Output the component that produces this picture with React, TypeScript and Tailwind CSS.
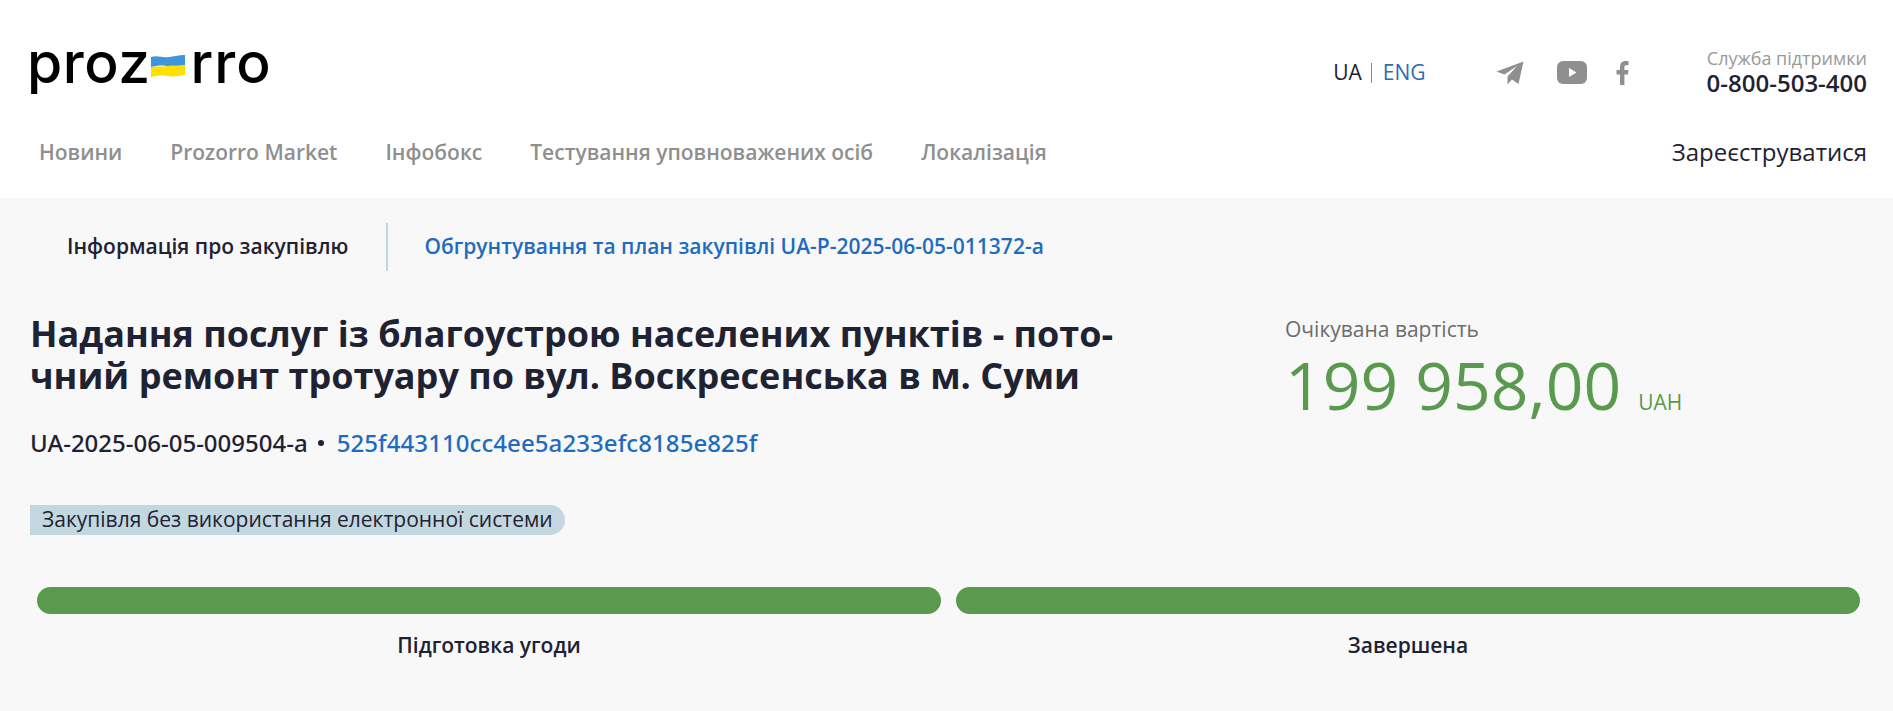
export default function App() {
  const nav = ["Новини", "Prozorro Market", "Інфобокс", "Тестування уповноважених осіб", "Локалізація"];
  return (
    <div className="min-h-[711px] bg-[#f8f8f8] font-['Open_Sans',sans-serif] text-[#1e2233]">
      <header className="h-[198px] bg-white pl-[30px] pr-[26px]">
        <div className="flex h-[122px] items-center justify-between">
          <div className="ml-[-3px] mt-[2px] flex items-center font-['Inter',sans-serif] text-[57px] font-[550] leading-none text-black">
            <span className="tracking-[0.5px]">proz</span>
            <svg className="mr-[6px] mt-[8px]" width="34" height="22" viewBox="0 0 34 22" aria-hidden="true">
              <path d="M0 2 C7 0 11 3 18 2 S29 0 34 0 V10 C27 11 23 12 16 11 S6 11 0 12 Z" fill="#3d95dc" />
              <path d="M0 12 C6 11 10 12 16 11 S27 11 34 10 V20 C27 21 23 22 16 21 S6 21 0 22 Z" fill="#ffe000" />
            </svg>
            <span className="tracking-[1px]">rro</span>
          </div>
          <div className="mt-[23px] flex items-center">
            <div className="flex items-center text-[21px] leading-none">
              <span>UA</span>
              <span className="ml-[9px] mr-[11px] h-[20px] w-px bg-[#8f8f8f]" />
              <span className="text-[#2d6cb5]">ENG</span>
            </div>
            <div className="ml-[70px] flex items-center text-[#8f8f8f]">
              <svg width="28" height="24" viewBox="0 0 28 24" fill="currentColor" aria-hidden="true">
                <path d="M27.5 0.5 L0.5 10.5 L8.5 13.5 L21 5 L11.5 15.5 L11.5 23.5 L16 18.5 L22.5 23 Z" />
              </svg>
              <svg className="ml-[33px]" width="30" height="23" viewBox="0 0 30 23" aria-hidden="true">
                <rect width="30" height="23" rx="6" fill="currentColor" />
                <path d="M12 7 L19.5 11.5 L12 16 Z" fill="#fff" />
              </svg>
              <svg className="ml-[29px]" width="13" height="24" viewBox="0 0 13 24" fill="currentColor" aria-hidden="true">
                <path d="M4 24 V13.5 H0.5 V9 H4 V6 C4 2 6.3 0 9.5 0 C11 0 12.2 0.1 12.6 0.2 V4.2 H10.3 C8.7 4.2 8.4 5 8.4 6.2 V9 H12.5 L11.9 13.5 H8.4 V24 Z" />
              </svg>
            </div>
            <div className="ml-[78px] mt-[-4px] flex flex-col items-end">
              <span className="text-[18px] leading-[24px] text-[#999999]">Служба підтримки</span>
              <span className="text-[24px] font-semibold leading-[26px]">0-800-503-400</span>
            </div>
          </div>
        </div>
        <div className="flex items-center justify-between">
          <nav className="ml-[9px] flex gap-[48px] text-[21px] font-semibold leading-[60px] text-[#8f8f8f]">
            {nav.map((n) => (
              <span key={n}>{n}</span>
            ))}
          </nav>
          <span className="text-[24px] leading-[60px]">Зареєструватися</span>
        </div>
      </header>

      <main className="pl-[30px] pr-[27px]">
        <div className="mt-[25px] flex h-[48px] items-center text-[21px] font-semibold">
          <span className="ml-[37px]">Інформація про закупівлю</span>
          <span className="ml-[38px] mr-[36px] h-[48px] w-[2px] bg-[#c3d5df]" />
          <span className="text-[#1f6bc0]">Обгрунтування та план закупівлі UA-P-2025-06-05-011372-а</span>
        </div>

        <div className="mt-[42px] flex">
          <div className="w-[1255px]">
            <h1 className="w-[1200px] text-[36px] font-bold leading-[42px]">
              Надання послуг із благоустрою населених пунктів - пото-
              <br />
              чний ремонт тротуару по вул. Воскресенська в м. Суми
            </h1>
            <div className="mt-[31px] flex items-center font-['Noto_Sans',sans-serif] text-[24px] font-medium leading-[30px]">
              <span>UA-2025-06-05-009504-a</span>
              <span className="ml-[10px] mr-[13px] h-[6px] w-[6px] rounded-full bg-[#1e2233]" />
              <span className="tracking-[0.08px] text-[#1f6bc0]">525f443110cc4ee5a233efc8185e825f</span>
            </div>
            <div className="mt-[47px] inline-flex h-[30px] items-center rounded-l-[4px] rounded-r-full bg-[#c3d7e0] px-[12px] text-[21px]">
              Закупівля без використання електронної системи
            </div>
          </div>
          <div className="mt-[1px]">
            <div className="text-[21px] leading-[30px] text-[#6c6c6c]">Очікувана вартість</div>
            <div className="flex items-baseline text-[#5a9a4e]">
              <span className="text-[66px] leading-[80px]">199 958,00</span>
              <span className="ml-[17px] text-[21px]">UAH</span>
            </div>
          </div>
        </div>

        <div className="mt-[52px] grid grid-cols-2 gap-[15px] pl-[7px] pr-[6px]">
          {["Підготовка угоди", "Завершена"].map((s) => (
            <div key={s} className="flex flex-col items-center">
              <div className="h-[27px] w-full rounded-full bg-[#5a9a4e]" />
              <div className="mt-[16px] text-[21px] font-semibold leading-[30px]">{s}</div>
            </div>
          ))}
        </div>
      </main>
    </div>
  );
}
